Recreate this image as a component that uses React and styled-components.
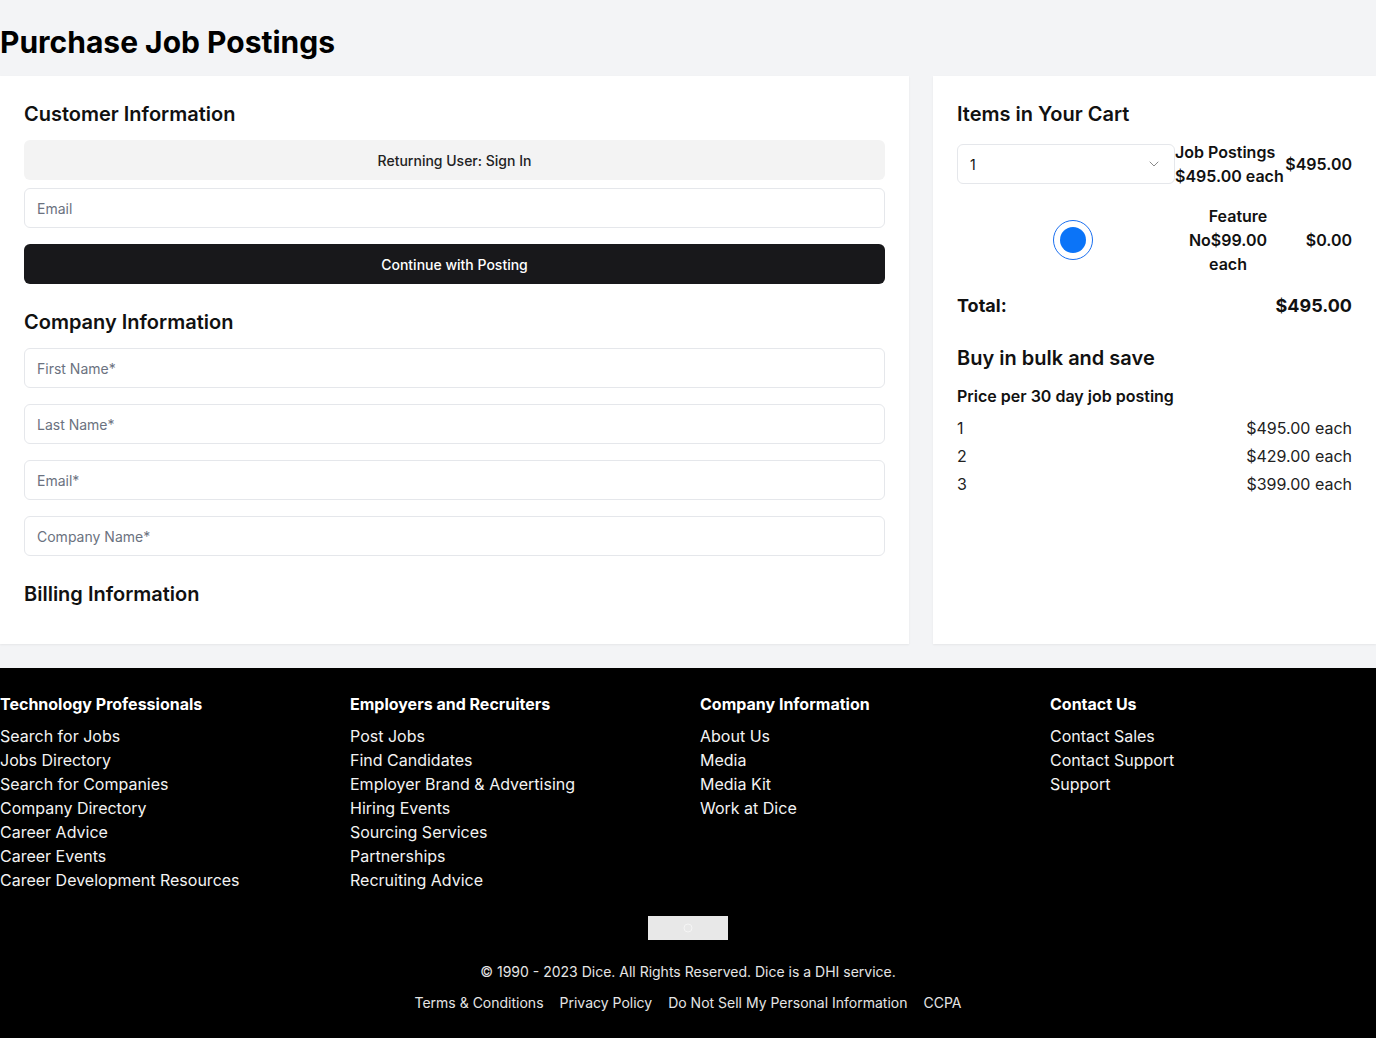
import styled, { createGlobalStyle } from "styled-components";
import { ChevronDown } from "lucide-react";

const GlobalStyle = createGlobalStyle`
  * { box-sizing: border-box; }
  body {
    margin: 0;
    background: #f3f4f6;
    font-family: Inter, "Noto Sans", sans-serif;
    color: #111;
  }
  p, h1, h2, h3 { margin: 0; }
`;

const bulk = [
  ["1", "$495.00 each"],
  ["2", "$429.00 each"],
  ["3", "$399.00 each"],
];

const footerCols = [
  {
    title: "Technology Professionals",
    links: [
      "Search for Jobs",
      "Jobs Directory",
      "Search for Companies",
      "Company Directory",
      "Career Advice",
      "Career Events",
      "Career Development Resources",
    ],
  },
  {
    title: "Employers and Recruiters",
    links: [
      "Post Jobs",
      "Find Candidates",
      "Employer Brand & Advertising",
      "Hiring Events",
      "Sourcing Services",
      "Partnerships",
      "Recruiting Advice",
    ],
  },
  {
    title: "Company Information",
    links: ["About Us", "Media", "Media Kit", "Work at Dice"],
  },
  {
    title: "Contact Us",
    links: ["Contact Sales", "Contact Support", "Support"],
  },
];

const App = () => {
  return (
    <>
      <GlobalStyle />
      <Header>
        <Title>Purchase Job Postings</Title>
      </Header>
      <Main>
        <Panel>
          <SectionTitle>Customer Information</SectionTitle>
          <Stack>
            <GhostButton>Returning User: Sign In</GhostButton>
            <Input placeholder="Email" />
          </Stack>
          <DarkButton>Continue with Posting</DarkButton>
          <SectionTitle $top={24}>Company Information</SectionTitle>
          <Fields>
            <Input placeholder="First Name*" />
            <Input placeholder="Last Name*" />
            <Input placeholder="Email*" />
            <Input placeholder="Company Name*" />
          </Fields>
          <SectionTitle $top={24}>Billing Information</SectionTitle>
        </Panel>

        <Panel>
          <SectionTitle>Items in Your Cart</SectionTitle>
          <CartRow>
            <SelectBox>
              <span>1</span>
              <ChevronDown size={16} color="#8a8a8a" strokeWidth={1.5} />
            </SelectBox>
            <ItemText>
              Job Postings
              <br />
              $495.00 each
            </ItemText>
            <Price>$495.00</Price>
          </CartRow>
          <CartRow $top={16}>
            <RadioCell>
              <Radio />
            </RadioCell>
            <FeatureText>
              <FeatureLabel>Feature</FeatureLabel> No$99.00 each
            </FeatureText>
            <Price>$0.00</Price>
          </CartRow>
          <TotalRow>
            <span>Total:</span>
            <span>$495.00</span>
          </TotalRow>
          <SectionTitle $top={26}>Buy in bulk and save</SectionTitle>
          <SubTitle>Price per 30 day job posting</SubTitle>
          <BulkList>
            {bulk.map(([n, p]) => (
              <BulkRow key={n}>
                <span>{n}</span>
                <span>{p}</span>
              </BulkRow>
            ))}
          </BulkList>
        </Panel>
      </Main>

      <Footer>
        <FooterGrid>
          {footerCols.map((col) => (
            <FooterCol key={col.title}>
              <FooterHeading>{col.title}</FooterHeading>
              <FooterLinks>
                {col.links.map((l) => (
                  <FooterLink key={l}>{l}</FooterLink>
                ))}
              </FooterLinks>
            </FooterCol>
          ))}
        </FooterGrid>
        <Logo>
          <svg width="10" height="10" viewBox="0 0 10 10">
            <circle cx="5" cy="5" r="4" fill="none" stroke="#f5f5f5" strokeWidth="1" />
          </svg>
        </Logo>
        <Copyright>© 1990 - 2023 Dice. All Rights Reserved. Dice is a DHI service.</Copyright>
        <LegalLinks>
          <span>Terms &amp; Conditions</span>
          <span>Privacy Policy</span>
          <span>Do Not Sell My Personal Information</span>
          <span>CCPA</span>
        </LegalLinks>
      </Footer>
    </>
  );
};

const Header = styled.header`
  padding: 24px 0 16px;
`;

const Title = styled.h1`
  font-size: 30px;
  line-height: 36px;
  font-weight: 700;
  color: #000;
`;

const Main = styled.main`
  display: grid;
  grid-template-columns: 909px 1fr;
  gap: 24px;
`;

const Panel = styled.section`
  background: #fff;
  padding: 24px 24px 36px;
  display: flex;
  flex-direction: column;
  box-shadow: 0 1px 2px rgba(0, 0, 0, 0.06);
`;

const SectionTitle = styled.h2`
  font-size: 20px;
  line-height: 28px;
  font-weight: 600;
  color: #111;
  margin-top: ${(p) => p.$top || 0}px;
`;

const Stack = styled.div`
  display: flex;
  flex-direction: column;
  gap: 8px;
  margin-top: 12px;
`;

const Fields = styled.div`
  display: flex;
  flex-direction: column;
  gap: 16px;
  margin-top: 12px;
`;

const GhostButton = styled.button`
  height: 40px;
  border: none;
  border-radius: 6px;
  background: #f3f3f3;
  font-family: inherit;
  font-size: 14px;
  font-weight: 500;
  color: #222;
`;

const DarkButton = styled.button`
  height: 40px;
  margin-top: 16px;
  border: none;
  border-radius: 6px;
  background: #18181b;
  font-family: inherit;
  font-size: 14px;
  font-weight: 500;
  color: #fff;
`;

const Input = styled.input`
  height: 40px;
  border: 1px solid #e5e7eb;
  border-radius: 6px;
  padding: 0 12px;
  font-family: inherit;
  font-size: 14px;
  background: #fff;
  &::placeholder {
    color: #6b7280;
  }
`;

const CartRow = styled.div`
  display: flex;
  align-items: center;
  margin-top: ${(p) => p.$top ?? 12}px;
`;

const SelectBox = styled.div`
  width: 218px;
  height: 40px;
  border: 1px solid #e5e7eb;
  border-radius: 6px;
  display: flex;
  align-items: center;
  justify-content: space-between;
  padding: 0 12px 0 12px;
  font-size: 14px;
  color: #111;
`;

const ItemText = styled.p`
  font-size: 16px;
  line-height: 24px;
  font-weight: 600;
  white-space: nowrap;
`;

const Price = styled.p`
  margin-left: auto;
  font-size: 16px;
  line-height: 24px;
  font-weight: 600;
`;

const RadioCell = styled.div`
  width: 232px;
  display: flex;
  justify-content: center;
`;

const Radio = styled.span`
  width: 40px;
  height: 40px;
  border-radius: 50%;
  border: 1px solid #1a6ff0;
  display: flex;
  align-items: center;
  justify-content: center;
  &::after {
    content: "";
    width: 26px;
    height: 26px;
    border-radius: 50%;
    background: #0b74f8;
  }
`;

const FeatureText = styled.p`
  width: 80px;
  margin-left: -1px;
  text-align: center;
  font-size: 16px;
  line-height: 24px;
  font-weight: 600;
`;

const FeatureLabel = styled.span`
  display: block;
  padding-left: 20px;
`;

const TotalRow = styled.div`
  display: flex;
  justify-content: space-between;
  margin-top: 18px;
  font-size: 18px;
  line-height: 24px;
  font-weight: 700;
`;

const SubTitle = styled.p`
  margin-top: 12px;
  font-size: 16px;
  line-height: 24px;
  font-weight: 600;
`;

const BulkList = styled.div`
  display: flex;
  flex-direction: column;
  gap: 4px;
  margin-top: 8px;
`;

const BulkRow = styled.div`
  display: flex;
  justify-content: space-between;
  font-size: 16px;
  line-height: 24px;
  color: #222;
`;

const Footer = styled.footer`
  margin-top: 24px;
  background: #000;
  color: #fff;
  padding: 24px 0 25px;
  display: flex;
  flex-direction: column;
  align-items: center;
`;

const FooterGrid = styled.div`
  align-self: stretch;
  display: grid;
  grid-template-columns: repeat(4, 350px);
`;

const FooterCol = styled.div`
  display: flex;
  flex-direction: column;
  gap: 8px;
`;

const FooterHeading = styled.h3`
  font-size: 16px;
  line-height: 24px;
  font-weight: 700;
`;

const FooterLinks = styled.ul`
  list-style: none;
  margin: 0;
  padding: 0;
`;

const FooterLink = styled.li`
  font-size: 16px;
  line-height: 24px;
  color: #f3f3f3;
`;

const Logo = styled.div`
  margin-top: 24px;
  width: 80px;
  height: 24px;
  background: #e8e8e8;
  display: flex;
  align-items: center;
  justify-content: center;
`;

const Copyright = styled.p`
  margin-top: 22px;
  font-size: 14px;
  line-height: 20px;
  color: #e5e5e5;
`;

const LegalLinks = styled.div`
  margin-top: 11px;
  display: flex;
  gap: 16px;
  font-size: 14px;
  line-height: 20px;
  color: #e5e5e5;
`;

export default App;
